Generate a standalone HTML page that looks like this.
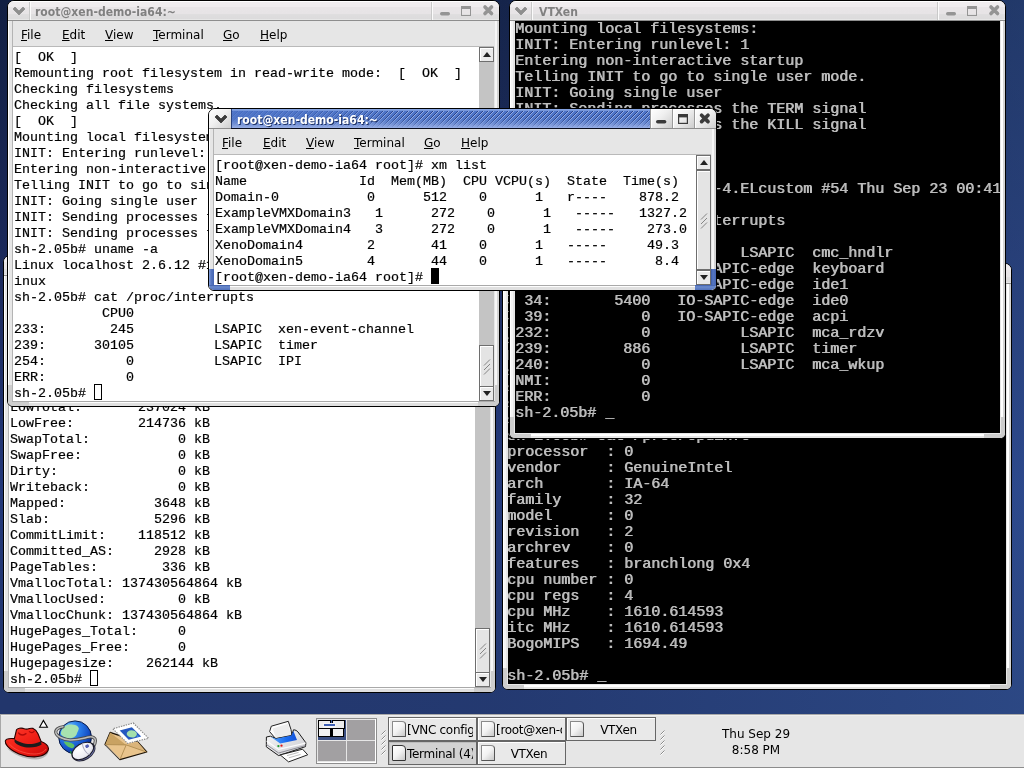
<!DOCTYPE html>
<html lang="en"><head><meta charset="utf-8"><title>desktop</title>
<style>
*{margin:0;padding:0;box-sizing:border-box}
html,body{width:1024px;height:768px;overflow:hidden}
body{position:relative;background:#1d2f62;font-family:"DejaVu Sans","Liberation Sans",sans-serif;font-size:13px;color:#000}
#desk{position:absolute;left:0;top:0;width:1024px;height:768px;
 background:
  linear-gradient(90deg,rgba(60,100,170,0) 0,rgba(60,100,170,.07) 500px,rgba(60,100,170,.38) 1024px),
  linear-gradient(180deg,#121f43 0,#1b295a 255px,#23387a 490px,#22366c 700px);}
.win{position:absolute;border:1px solid #000;border-radius:7px 7px 6px 6px;background:#e6e6e6;overflow:hidden}
.abs{position:absolute}
.tb{position:absolute;left:0;top:0;right:0;height:19px;background:linear-gradient(180deg,#fff 0,#fff 1px,#f0edef 1px,#efecee 5.5px,#e8e5e7 6.5px,#e7e4e6 12.5px,#dfdedf 13.5px,#dcdbdc 18px,#e6e6e6 18px)}
.tbl{position:absolute;left:0;right:0;top:19px;height:1px;background:#8e8e8e}
.tt{position:absolute;top:0;height:19px;line-height:21px;font-weight:bold;font-size:13px;transform:scaleX(.928);transform-origin:0 50%;font-family:"DejaVu Sans Condensed","DejaVu Sans","Liberation Sans",sans-serif;font-stretch:condensed;color:#808080;white-space:nowrap;letter-spacing:0}
.mb{position:absolute;height:25px;background:#e6e6e6;font-size:12px;white-space:nowrap}
.mb span{position:absolute;top:0;line-height:29px}
.mb u{text-decoration:underline;text-underline-offset:1px;text-decoration-thickness:1px}
.term{position:absolute;background:#fff;overflow:hidden}
.vt{position:absolute;background:#000;overflow:hidden}
pre{font-family:"Liberation Mono","DejaVu Sans Mono",monospace;white-space:pre;will-change:transform}
.mb span,.tk b,.clk{will-change:transform}
.clk{display:inline-block}
.term pre{position:absolute;left:1px;top:3px;font-size:13.333px;line-height:16px;color:#000;-webkit-text-stroke:.2px #000}
.vt pre{position:absolute;left:0;top:0;margin-top:1px;margin-left:-.5px;font-size:15px;line-height:16px;color:#bcbcbc;text-shadow:.7px 0 0 #bcbcbc}
.cur{display:inline-block;width:8px;height:16px;border:1px solid #000;vertical-align:top;position:relative;top:-2px}
.curf{display:inline-block;width:8px;height:16px;background:#000;vertical-align:top;position:relative;top:-2px}
.sb{position:absolute;width:15px;background:#c4c4c4;border-left:1px solid #8f8f8f;border-right:1px solid #8f8f8f}
.sbb{position:absolute;left:0;width:15px;height:15px;background:#eaeaea;border:1px solid #6e6e6e;box-shadow:inset 1px 1px 0 #fff}
.sbs{position:absolute;left:0;width:15px;background:#e4e4e4;border:1px solid #6e6e6e;box-shadow:inset 1px 1px 0 #fff}
.ar{position:absolute;left:3px;width:0;height:0;border-left:4px solid transparent;border-right:4px solid transparent}
.aru{top:4px;border-bottom:5px solid #222}
.ard{top:4px;border-top:5px solid #222}
#panel{position:absolute;left:0;top:714px;width:1024px;height:54px;background:#e6e6e6;border-top:1px solid #a9a9a9;border-bottom:1px solid #8c8c8c;border-left:1px solid #a8a8a8;box-shadow:inset 0 1px 0 #efefef}
.tk{position:absolute;height:24px;border:1px solid #666;background:#e9e9e9;box-shadow:inset 1px 1px 0 #fff;font-size:12px;line-height:22px;white-space:nowrap;overflow:hidden}
.tk.on{background:#d2d2d2;box-shadow:inset 1px 1px 0 #bdbdbd}
.tk i{position:absolute;left:3px;top:3px;width:14px;height:16px;border:1px solid #8a8a8a;border-right-color:#555;border-bottom-color:#555;border-radius:1px 4px 1px 1px;background:linear-gradient(135deg,#fff 0,#f2f2f2 50%,#c8c8c8 100%)}
.tk.on i{border-color:#333}
.tk b{position:absolute;font-weight:normal;top:1px;overflow:hidden;height:22px;letter-spacing:-.3px}
.grip{position:absolute;width:5px;background:repeating-linear-gradient(135deg,#e6e6e6 0,#e6e6e6 2.2px,#9a9a9a 2.2px,#9a9a9a 3.2px,#fff 3.2px,#fff 4.2px)}
</style></head>
<body>
<div id="desk"></div>
<div class="win" style="left:3px;top:255px;width:493px;height:438px"><div class="tb"></div><div class="tbl"></div><svg class="abs" style="left:0;top:0" width="22" height="19" viewBox="0 0 22 19"><path d="M5 8L7 6L11 10L15 6L17 8L11 14Z" fill="#8e8e8e" stroke="#8e8e8e" stroke-width=".8" stroke-linejoin="round"/></svg><div class="abs" style="left:21px;top:1px;width:1px;height:18px;background:#c9c9c9"></div><div class="abs" style="left:22px;top:1px;width:1px;height:18px;background:#fbfbfb"></div><div class="tt" style="left:27px">root@xen-demo-ia64:~</div><div class="abs" style="left:423px;top:1px;width:1px;height:18px;background:#c9c9c9"></div><div class="abs" style="left:424px;top:1px;width:1px;height:18px;background:#fbfbfb"></div><svg class="abs" style="left:425px;top:0" width="66" height="19" viewBox="0 0 66 19"><rect x="7" y="11" width="10" height="3.4" rx="1.7" fill="#949494"/><rect x="28.5" y="5.5" width="9" height="9" fill="none" stroke="#949494" stroke-width="1"/><rect x="28" y="5" width="10" height="3" fill="#949494"/><path d="M52 6L58.5 12.5M58.5 6L52 12.5" stroke="#949494" stroke-width="3.6" stroke-linecap="round"/></svg><div class="abs" style="left:0;top:20px;width:1px;height:416px;background:#fff"></div><div class="abs" style="left:4px;top:20px;width:1px;height:412px;background:#b4b4b4"></div><div class="abs" style="left:489px;top:20px;width:2px;height:416px;background:#d4d4d4"></div><div class="abs" style="left:487px;top:20px;width:2px;height:416px;background:#f6f6f6"></div><div class="mb" style="left:5px;top:20px;width:481px"><span style="left:8px"><u>F</u>ile</span><span style="left:49px"><u>E</u>dit</span><span style="left:92px"><u>V</u>iew</span><span style="left:140px"><u>T</u>erminal</span><span style="left:210px"><u>G</u>o</span><span style="left:247px"><u>H</u>elp</span></div><div class="abs" style="left:5px;top:45px;width:481px;height:1px;background:#b9b9b9"></div><div class="term" style="left:5px;top:46px;width:466px;height:385px"><pre style="margin-top:-1px">MemTotal:       245760 kB
MemFree:        214736 kB
Buffers:             0 kB
Cached:           8912 kB
SwapCached:          0 kB
HighTotal:           0 kB
LowTotal:       237024 kB
LowFree:        214736 kB
SwapTotal:           0 kB
SwapFree:            0 kB
Dirty:               0 kB
Writeback:           0 kB
Mapped:           3648 kB
Slab:             5296 kB
CommitLimit:    118512 kB
Committed_AS:     2928 kB
PageTables:        336 kB
VmallocTotal: 137430564864 kB
VmallocUsed:         0 kB
VmallocChunk: 137430564864 kB
HugePages_Total:     0
HugePages_Free:      0
Hugepagesize:    262144 kB
sh-2.05b# <span class="cur"></span></pre></div><div class="sb" style="left:471px;top:46px;height:385px;background:#c4c4c4;border:0"><div class="sbb" style="left:0;top:0"><div class="ar aru"></div></div><div class="sbs" style="left:0;top:326px;height:45px"><svg class="abs" style="left:3px;top:14px" width="8" height="16" viewBox="0 0 8 16"><path d="M1 6.5L7 .5M1 11L7 5M1 15.5L7 9.5" stroke="#858585" stroke-width="1" fill="none"/></svg></div><div class="sbb" style="left:0;top:370px"><div class="ar ard"></div></div></div><div class="abs" style="left:0;top:431px;width:491px;height:1px;background:#a9a9a9"></div><div class="abs" style="left:1px;top:432px;width:489px;height:1px;background:#fdfdfd"></div><div class="abs" style="left:0;top:433px;width:491px;height:3px;background:#e0e0e0"></div><div class="abs" style="left:0;top:415px;width:4px;height:21px;background:#cdcdcd"></div><div class="abs" style="left:0;top:432px;width:21px;height:4px;background:#cdcdcd"></div><div class="abs" style="left:487px;top:415px;width:4px;height:21px;background:#cdcdcd"></div><div class="abs" style="left:470px;top:432px;width:21px;height:4px;background:#cdcdcd"></div></div>
<div class="win" style="left:502px;top:263px;width:510px;height:427px"><div class="tb"></div><div class="tbl"></div><svg class="abs" style="left:0;top:0" width="22" height="19" viewBox="0 0 22 19"><path d="M5 8L7 6L11 10L15 6L17 8L11 14Z" fill="#8e8e8e" stroke="#8e8e8e" stroke-width=".8" stroke-linejoin="round"/></svg><div class="abs" style="left:21px;top:1px;width:1px;height:18px;background:#c9c9c9"></div><div class="abs" style="left:22px;top:1px;width:1px;height:18px;background:#fbfbfb"></div><div class="tt" style="left:28.5px">VTXen</div><div class="abs" style="left:440px;top:1px;width:1px;height:18px;background:#c9c9c9"></div><div class="abs" style="left:441px;top:1px;width:1px;height:18px;background:#fbfbfb"></div><svg class="abs" style="left:442px;top:0" width="66" height="19" viewBox="0 0 66 19"><rect x="7" y="11" width="10" height="3.4" rx="1.7" fill="#949494"/><rect x="28.5" y="5.5" width="9" height="9" fill="none" stroke="#949494" stroke-width="1"/><rect x="28" y="5" width="10" height="3" fill="#949494"/><path d="M52 6L58.5 12.5M58.5 6L52 12.5" stroke="#949494" stroke-width="3.6" stroke-linecap="round"/></svg><div class="abs" style="left:0;top:20px;width:1px;height:405px;background:#fff"></div><div class="abs" style="left:1px;top:20px;width:2px;height:405px;background:#f4f4f4"></div><div class="abs" style="left:504px;top:20px;width:2px;height:405px;background:#fff"></div><div class="abs" style="left:506px;top:20px;width:2px;height:405px;background:#d4d4d4"></div><div class="vt" style="left:5px;top:20px;width:498px;height:400px"><pre style="top:0px;left:-0.5px">INIT: Going single user
INIT: Sending processes the TERM signal
INIT: Sending processes the KILL signal
sh-2.05b# uname -a
Linux localhost 2.6.12 #1 SMP ia64 GNU/Linux
sh-2.05b#
sh-2.05b#
sh-2.05b#
sh-2.05b#
sh-2.05b# cat /proc/cpuinfo
processor  : 0
vendor     : GenuineIntel
arch       : IA-64
family     : 32
model      : 0
revision   : 2
archrev    : 0
features   : branchlong 0x4
cpu number : 0
cpu regs   : 4
cpu MHz    : 1610.614593
itc MHz    : 1610.614593
BogoMIPS   : 1694.49

sh-2.05b# _</pre></div><div class="abs" style="left:1px;top:421px;width:506px;height:2px;background:#fff"></div><div class="abs" style="left:0;top:404px;width:4px;height:21px;background:#cdcdcd"></div><div class="abs" style="left:0;top:421px;width:21px;height:4px;background:#cdcdcd"></div><div class="abs" style="left:504px;top:404px;width:4px;height:21px;background:#cdcdcd"></div><div class="abs" style="left:487px;top:421px;width:21px;height:4px;background:#cdcdcd"></div></div>
<div class="win" style="left:7px;top:0px;width:493px;height:407px"><div class="tb"></div><div class="tbl"></div><svg class="abs" style="left:0;top:0" width="22" height="19" viewBox="0 0 22 19"><path d="M5 8L7 6L11 10L15 6L17 8L11 14Z" fill="#8e8e8e" stroke="#8e8e8e" stroke-width=".8" stroke-linejoin="round"/></svg><div class="abs" style="left:21px;top:1px;width:1px;height:18px;background:#c9c9c9"></div><div class="abs" style="left:22px;top:1px;width:1px;height:18px;background:#fbfbfb"></div><div class="tt" style="left:27px">root@xen-demo-ia64:~</div><div class="abs" style="left:423px;top:1px;width:1px;height:18px;background:#c9c9c9"></div><div class="abs" style="left:424px;top:1px;width:1px;height:18px;background:#fbfbfb"></div><svg class="abs" style="left:425px;top:0" width="66" height="19" viewBox="0 0 66 19"><rect x="7" y="11" width="10" height="3.4" rx="1.7" fill="#949494"/><rect x="28.5" y="5.5" width="9" height="9" fill="none" stroke="#949494" stroke-width="1"/><rect x="28" y="5" width="10" height="3" fill="#949494"/><path d="M52 6L58.5 12.5M58.5 6L52 12.5" stroke="#949494" stroke-width="3.6" stroke-linecap="round"/></svg><div class="abs" style="left:0;top:20px;width:1px;height:385px;background:#fff"></div><div class="abs" style="left:4px;top:20px;width:1px;height:381px;background:#b4b4b4"></div><div class="abs" style="left:489px;top:20px;width:2px;height:385px;background:#d4d4d4"></div><div class="abs" style="left:487px;top:20px;width:2px;height:385px;background:#f6f6f6"></div><div class="mb" style="left:5px;top:20px;width:481px"><span style="left:8px"><u>F</u>ile</span><span style="left:49px"><u>E</u>dit</span><span style="left:92px"><u>V</u>iew</span><span style="left:140px"><u>T</u>erminal</span><span style="left:210px"><u>G</u>o</span><span style="left:247px"><u>H</u>elp</span></div><div class="abs" style="left:5px;top:45px;width:481px;height:1px;background:#b9b9b9"></div><div class="term" style="left:5px;top:46px;width:466px;height:354px"><pre style="margin-top:0px">[  OK  ]
Remounting root filesystem in read-write mode:  [  OK  ]
Checking filesystems
Checking all file systems.
[  OK  ]
Mounting local filesystems:  [  OK  ]
INIT: Entering runlevel: 1
Entering non-interactive startup
Telling INIT to go to single user mode.
INIT: Going single user
INIT: Sending processes the TERM signal
INIT: Sending processes the KILL signal
sh-2.05b# uname -a
Linux localhost 2.6.12 #1 SMP Thu Sep 29 19:02:11 CST 2005 ia64 ia64 ia64 GNU/L
inux
sh-2.05b# cat /proc/interrupts
           CPU0
233:        245          LSAPIC  xen-event-channel
239:      30105          LSAPIC  timer
254:          0          LSAPIC  IPI
ERR:          0
sh-2.05b# <span class="cur"></span></pre></div><div class="sb" style="left:471px;top:46px;height:354px;background:#c4c4c4;border:0"><div class="sbb" style="left:0;top:0"><div class="ar aru"></div></div><div class="sbs" style="left:0;top:298px;height:42px"><svg class="abs" style="left:3px;top:13px" width="8" height="16" viewBox="0 0 8 16"><path d="M1 6.5L7 .5M1 11L7 5M1 15.5L7 9.5" stroke="#858585" stroke-width="1" fill="none"/></svg></div><div class="sbb" style="left:0;top:339px"><div class="ar ard"></div></div></div><div class="abs" style="left:0;top:400px;width:491px;height:1px;background:#a9a9a9"></div><div class="abs" style="left:1px;top:401px;width:489px;height:1px;background:#fdfdfd"></div><div class="abs" style="left:0;top:402px;width:491px;height:3px;background:#e0e0e0"></div><div class="abs" style="left:0;top:384px;width:4px;height:21px;background:#cdcdcd"></div><div class="abs" style="left:0;top:401px;width:21px;height:4px;background:#cdcdcd"></div><div class="abs" style="left:487px;top:384px;width:4px;height:21px;background:#cdcdcd"></div><div class="abs" style="left:470px;top:401px;width:21px;height:4px;background:#cdcdcd"></div></div>
<div class="win" style="left:509px;top:0px;width:497px;height:439px"><div class="tb"></div><div class="tbl"></div><svg class="abs" style="left:0;top:0" width="22" height="19" viewBox="0 0 22 19"><path d="M5 8L7 6L11 10L15 6L17 8L11 14Z" fill="#8e8e8e" stroke="#8e8e8e" stroke-width=".8" stroke-linejoin="round"/></svg><div class="abs" style="left:21px;top:1px;width:1px;height:18px;background:#c9c9c9"></div><div class="abs" style="left:22px;top:1px;width:1px;height:18px;background:#fbfbfb"></div><div class="tt" style="left:28.5px">VTXen</div><div class="abs" style="left:427px;top:1px;width:1px;height:18px;background:#c9c9c9"></div><div class="abs" style="left:428px;top:1px;width:1px;height:18px;background:#fbfbfb"></div><svg class="abs" style="left:429px;top:0" width="66" height="19" viewBox="0 0 66 19"><rect x="7" y="11" width="10" height="3.4" rx="1.7" fill="#949494"/><rect x="28.5" y="5.5" width="9" height="9" fill="none" stroke="#949494" stroke-width="1"/><rect x="28" y="5" width="10" height="3" fill="#949494"/><path d="M52 6L58.5 12.5M58.5 6L52 12.5" stroke="#949494" stroke-width="3.6" stroke-linecap="round"/></svg><div class="abs" style="left:0;top:20px;width:1px;height:417px;background:#fff"></div><div class="abs" style="left:1px;top:20px;width:2px;height:417px;background:#f4f4f4"></div><div class="abs" style="left:491px;top:20px;width:2px;height:417px;background:#fff"></div><div class="abs" style="left:493px;top:20px;width:2px;height:417px;background:#d4d4d4"></div><div class="vt" style="left:5px;top:20px;width:485px;height:412px"><pre style="top:0px;left:0px">Mounting local filesystems:
INIT: Entering runlevel: 1
Entering non-interactive startup
Telling INIT to go to single user mode.
INIT: Going single user
INIT: Sending processes the TERM signal
INIT: Sending processes the KILL signal
sh-2.05b#
sh-2.05b#
sh-2.05b# uname -a
Linux localhost 2.4.21-4.ELcustom #54 Thu Sep 23 00:41:15 CST 2004
sh-2.05b#
sh-2.05b# cat /proc/interrupts
           CPU0
 28:          0          LSAPIC  cmc_hndlr
 33:         12   IO-SAPIC-edge  keyboard
 37:          2   IO-SAPIC-edge  ide1
 34:       5400   IO-SAPIC-edge  ide0
 39:          0   IO-SAPIC-edge  acpi
232:          0          LSAPIC  mca_rdzv
239:        886          LSAPIC  timer
240:          0          LSAPIC  mca_wkup
NMI:          0
ERR:          0
sh-2.05b# _</pre></div><div class="abs" style="left:1px;top:433px;width:493px;height:2px;background:#fff"></div><div class="abs" style="left:0;top:416px;width:4px;height:21px;background:#cdcdcd"></div><div class="abs" style="left:0;top:433px;width:21px;height:4px;background:#cdcdcd"></div><div class="abs" style="left:491px;top:416px;width:4px;height:21px;background:#cdcdcd"></div><div class="abs" style="left:474px;top:433px;width:21px;height:4px;background:#cdcdcd"></div></div>
<div class="win" style="left:208px;top:108px;width:509px;height:183px"><div class="abs" style="left:0;top:0;width:22px;height:19px;background:linear-gradient(135deg,#fff 0,#f0f0f0 45%,#cfcfcf 100%)"></div><svg class="abs" style="left:0;top:0" width="22" height="19" viewBox="0 0 22 19"><path d="M6 8L8 6L12 10L16 6L18 8L12 14Z" fill="#3a3a3a" stroke="#3a3a3a" stroke-width=".8" stroke-linejoin="round"/></svg><div class="abs" style="left:22px;top:0;width:419px;height:19px;background:linear-gradient(180deg,#8aa8e4 0,#7696da 1.5px,#4e74c8 2.5px,#5277c8 10px,#6a8ad2 14px,#9ab0e6 19px);border-left:1px solid #28407c"></div><div class="abs" style="left:23px;top:2px;width:418px;height:16px;-webkit-mask-image:linear-gradient(90deg,rgba(0,0,0,.12) 0,rgba(0,0,0,.35) 18%,#000 42%);mask-image:linear-gradient(90deg,rgba(0,0,0,.12) 0,rgba(0,0,0,.35) 18%,#000 42%)"><div class="abs" style="left:0;top:0;width:418px;height:16px;background:repeating-linear-gradient(135deg,rgba(20,36,100,.62) 0,rgba(20,36,100,.62) .8px,rgba(190,210,250,.6) .8px,rgba(190,210,250,.6) 1.6px,rgba(0,0,0,0) 1.6px,rgba(0,0,0,0) 3.536px);-webkit-mask-image:linear-gradient(180deg,#000 0,#000 45%,rgba(0,0,0,.15) 100%);mask-image:linear-gradient(180deg,#000 0,#000 45%,rgba(0,0,0,.15) 100%)"></div></div><div class="abs" style="left:0;top:19px;width:507px;height:1px;background:#8e8e8e"></div><div class="abs" style="left:22px;top:19px;width:419px;height:1px;background:#080c1c"></div><div class="tt" style="left:28px;color:#fff;text-shadow:1px 1px 0 #1c2f63">root@xen-demo-ia64:~</div><div class="abs" style="left:441px;top:0;width:22px;height:19px;background:linear-gradient(135deg,#fff 0,#efefef 45%,#cdcdcd 100%);border-left:1px solid #9a9a9a;box-shadow:inset 1px 1px 0 #fff"></div><div class="abs" style="left:463px;top:0;width:22px;height:19px;background:linear-gradient(135deg,#fff 0,#efefef 45%,#cdcdcd 100%);border-left:1px solid #9a9a9a;box-shadow:inset 1px 1px 0 #fff"></div><div class="abs" style="left:485px;top:0;width:22px;height:19px;background:linear-gradient(135deg,#fff 0,#efefef 45%,#cdcdcd 100%);border-left:1px solid #9a9a9a;box-shadow:inset 1px 1px 0 #fff"></div><svg class="abs" style="left:441px;top:0" width="66" height="19" viewBox="0 0 66 19"><rect x="6" y="11" width="10.4" height="3.6" rx="1.8" fill="#3a3a3a"/><rect x="28.6" y="5.6" width="8.8" height="8.8" fill="none" stroke="#3a3a3a" stroke-width="1.2"/><rect x="28" y="5" width="10" height="3.4" fill="#3a3a3a"/><path d="M51.6 6.2L58 12.6M58 6.2L51.6 12.6" stroke="#3a3a3a" stroke-width="3.7" stroke-linecap="round"/></svg><div class="abs" style="left:0;top:20px;width:1px;height:161px;background:#fff"></div><div class="abs" style="left:4px;top:20px;width:1px;height:157px;background:#b4b4b4"></div><div class="abs" style="left:505px;top:20px;width:2px;height:161px;background:#d4d4d4"></div><div class="abs" style="left:503px;top:20px;width:2px;height:161px;background:#f6f6f6"></div><div class="mb" style="left:5px;top:20px;width:497px"><span style="left:8px"><u>F</u>ile</span><span style="left:49px"><u>E</u>dit</span><span style="left:92px"><u>V</u>iew</span><span style="left:140px"><u>T</u>erminal</span><span style="left:210px"><u>G</u>o</span><span style="left:247px"><u>H</u>elp</span></div><div class="abs" style="left:5px;top:45px;width:497px;height:1px;background:#b9b9b9"></div><div class="term" style="left:5px;top:46px;width:482px;height:130px"><pre style="margin-top:0px">[root@xen-demo-ia64 root]# xm list
Name              Id  Mem(MB)  CPU VCPU(s)  State  Time(s)
Domain-0           0      512    0      1   r----    878.2
ExampleVMXDomain3   1      272    0      1   -----   1327.2
ExampleVMXDomain4   3      272    0      1   -----    273.0
XenoDomain4        2       41    0      1   -----     49.3
XenoDomain5        4       44    0      1   -----      8.4
[root@xen-demo-ia64 root]# <span class="curf"></span></pre></div><div class="sb" style="left:487px;top:46px;height:130px;background:#e6e6e6;border:0"><div class="sbb" style="left:0;top:0"><div class="ar aru"></div></div><div class="sbs" style="left:0;top:15px;height:100px"><svg class="abs" style="left:3px;top:42px" width="8" height="16" viewBox="0 0 8 16"><path d="M1 6.5L7 .5M1 11L7 5M1 15.5L7 9.5" stroke="#858585" stroke-width="1" fill="none"/></svg></div><div class="sbb" style="left:0;top:115px"><div class="ar ard"></div></div></div><div class="abs" style="left:0;top:176px;width:507px;height:1px;background:#a9a9a9"></div><div class="abs" style="left:1px;top:177px;width:505px;height:1px;background:#fdfdfd"></div><div class="abs" style="left:0;top:178px;width:507px;height:3px;background:#e0e0e0"></div><div class="abs" style="left:0;top:160px;width:5px;height:21px;background:linear-gradient(90deg,#86a2dc 0,#5878c2 40%,#4464b2 100%)"></div><div class="abs" style="left:0;top:176px;width:21px;height:5px;background:linear-gradient(180deg,#3a5aa8 0,#6a8acc 35%,#5272bc 100%)"></div><div class="abs" style="left:502px;top:160px;width:5px;height:21px;background:linear-gradient(90deg,#3a5aa8 0,#5878c2 40%,#4464b2 100%)"></div><div class="abs" style="left:486px;top:176px;width:21px;height:5px;background:linear-gradient(180deg,#3a5aa8 0,#6a8acc 35%,#5272bc 100%)"></div></div>
<div id="panel"><svg class="abs" style="left:-1px;top:-1px" width="320" height="54" viewBox="0 714 320 54">
<defs>
<linearGradient id="rh" x1="0" y1="0" x2="1" y2="1"><stop offset="0" stop-color="#ff3a2a"/><stop offset=".55" stop-color="#ee1c14"/><stop offset="1" stop-color="#c40808"/></linearGradient>
<radialGradient id="gl" cx=".32" cy=".25" r=".8"><stop offset="0" stop-color="#8fd2ff"/><stop offset=".35" stop-color="#2f86ee"/><stop offset=".75" stop-color="#1450c8"/><stop offset="1" stop-color="#0a2478"/></radialGradient>
<radialGradient id="ms" cx=".4" cy=".3" r=".8"><stop offset="0" stop-color="#fff"/><stop offset=".7" stop-color="#ececf2"/><stop offset="1" stop-color="#b8b8cc"/></radialGradient>
<linearGradient id="pb" x1="0" y1="0" x2="1" y2="1"><stop offset="0" stop-color="#fafafa"/><stop offset="1" stop-color="#c9c9cf"/></linearGradient>
<linearGradient id="bl" x1="0" y1="0" x2="1" y2="0"><stop offset="0" stop-color="#5aa8ff"/><stop offset=".6" stop-color="#1a6cf0"/><stop offset="1" stop-color="#1450d8"/></linearGradient>
</defs>
<!-- red hat -->
<path d="M7 748C12 754 24 759.5 36 759.5C43 759 47.5 756 48.5 752C40 757 20 755 7 748Z" fill="#000" opacity=".22"/>
<path d="M5.3 741.2C5.6 739.4 8.5 738 14.4 738.6L16.5 729.8C17.5 728.2 21 727.8 23.2 728.4C25 729 26.4 729.3 27.6 729C29.6 728.2 31.6 728 33.1 728.4C35.6 729.4 37.2 731.6 38 733.7L41.1 741.4C45.2 742.8 48.2 745.4 48.5 748.5C48.4 752.6 44 756.4 34.5 756.9C24 757 13 752.4 7.6 746.4C5.8 744.4 5.1 742.6 5.3 741.2Z" fill="url(#rh)" stroke="#2a0000" stroke-width="1.1"/>
<path d="M14.5 738.8C18 742.4 26 744.6 32 744C36 743.6 39.4 742.4 40.9 741L41.6 744.4C38.6 746.6 33 747.8 27 747.4C21.6 747 16.6 744.8 14.6 742Z" fill="#1c1c1c"/>
<path d="M18.6 733C20.4 735.4 23.4 735.4 26 733.6M29.4 731.6C30.8 733 33 732.8 34 731.4" stroke="#b00a0a" stroke-width="1.3" fill="none" stroke-linecap="round"/>
<path d="M9 743.5C13 749.5 25 754 34 754C40 754 44.6 752 46 749" stroke="#ff5a48" stroke-width="1" fill="none" opacity=".7"/>
<path d="M39.6 727.2L43.4 720.4L47.4 727.2Z" fill="#fff" stroke="#000" stroke-width="1.1" stroke-linejoin="miter"/>
<!-- globe + mouse -->
<circle cx="75.1" cy="737.3" r="16.4" fill="url(#gl)" stroke="#061848" stroke-width="1"/>
<path d="M62.5 729C64 725.6 69 723.6 73 724.8C76 725 78.6 726.2 78.8 728.6C78.4 731.4 77 732.4 76.6 734.6C75.4 737 72.6 738.6 69 738.4C65.6 738 62.4 736.4 60.8 734.2C60.8 732.2 61.4 730.6 62.5 729Z" fill="#a8e2b0"/>
<path d="M63.6 741.6C66.6 741.4 70.6 742.6 73.6 744.2C75.2 745.4 74.4 747.4 72.4 748.2C69.6 748.4 65.4 745.6 63.6 741.6Z" fill="#5cc068"/>
<path d="M70.6 751C70.4 753 71.4 754 72.4 754.6" stroke="#2a9a3a" stroke-width="1.2" fill="none"/>
<path d="M63 726.8C58.4 727.2 55.2 729.8 55.8 732.6C56.8 736.4 62.6 739.4 70 740C78 740.2 84 738 89 737C93 736.4 95.4 738 95.4 740.6C95.4 743 94.4 745 93.4 746.6" stroke="#4a4a4a" stroke-width="3.2" fill="none" stroke-linecap="round"/>
<path d="M63 726.8C58.4 727.2 55.2 729.8 55.8 732.6C56.8 736.4 62.6 739.4 70 740C78 740.2 84 738 89 737C93 736.4 95.4 738 95.4 740.6C95.4 743 94.4 745 93.4 746.6" stroke="#bdbdbd" stroke-width="1.5" fill="none" stroke-linecap="round"/>
<g transform="rotate(-31 82.8 751)"><ellipse cx="83.2" cy="752.2" rx="12.2" ry="7.8" fill="#7a82c8" stroke="#2a2a3a" stroke-width="1"/><ellipse cx="82.8" cy="751" rx="11.9" ry="7.3" fill="url(#ms)" stroke="#1a1a24" stroke-width="1.1"/><path d="M86.5 744.2C84.2 748 84.2 754 86.5 757.8" stroke="#a8a8bc" stroke-width=".9" fill="none"/><rect x="87.2" y="747.6" width="3.6" height="3" rx="1" fill="#5560b4"/></g>
<!-- envelope + stamp -->
<path d="M110.1 732.4L105 744.6L119.9 759.6L146.8 752L137.5 741.6Z" fill="#e9c48c" stroke="#1c1206" stroke-width="1.2" stroke-linejoin="round"/>
<path d="M110.1 732.6L126.2 744.9L105.3 744.6Z" fill="#c9a262"/>
<path d="M126.2 744.9L137.5 741.8L146.4 752Z" fill="#dab47a"/>
<path d="M105.3 744.6L126.2 744.9L146.4 752M126.2 744.9L120.2 759" stroke="#b08c50" stroke-width=".9" fill="none"/>
<path d="M105.6 745.2L120.1 759.2" stroke="#fff" stroke-width=".8" opacity=".7"/>
<path d="M133.3 723L148.6 738.3L127.6 743.4L112.8 728.8Z" fill="#fff" stroke="#8a8a8a" stroke-width="1.2" stroke-dasharray="1.4 1.1"/>
<path d="M131.9 727.2L141.2 736.5L128.7 739.8L119.7 730.5Z" fill="#2458c0"/>
<path d="M128 731.4C130.4 729.6 134.4 730 136.4 732.4C137.6 734.4 136.4 736.6 133.4 737.4C130.4 737.8 127.6 736.4 126.8 734.4C126.6 733.2 127 732.2 128 731.4Z" fill="#a4e0ac"/>
<path d="M137.4 735.2L139.2 736.2L136.6 737Z" fill="#4aa0f0"/>
<!-- printer -->
<path d="M269.6 731.6L271.3 726.2L288.3 721.3L291 729.6L292 736L275.4 738.4Z" fill="#fdfdfd" stroke="#222" stroke-width="1" stroke-linejoin="round"/>
<path d="M272.6 728.4L288 723.8L291.2 735.6L276 738Z" fill="#ececec"/>
<path d="M266.4 737L270.4 736.2L276 738.6L291.6 735.4L293.5 729.8C295.4 729.8 297 730.8 298 732L305.9 742.8L305.5 746.6L297.4 749.4L278.6 755.6L266.3 746.8Z" fill="url(#pb)" stroke="#1a1a1a" stroke-width="1" stroke-linejoin="round"/>
<path d="M270.3 736.4L275.8 738.8L291.5 735.4L293.4 731L297 740L280.2 743.6Z" fill="url(#bl)"/>
<path d="M266.6 741L278.6 749.4L305.6 743.2" stroke="#fff" stroke-width="1.2" fill="none" opacity=".9"/>
<path d="M266.6 744.6L278.6 753L305.4 745.6" stroke="#8e8e96" stroke-width="1" fill="none"/>
<path d="M280.2 754.9L302.6 749.2L307.7 754.8L288.6 761.9Z" fill="#fff" stroke="#222" stroke-width="1" stroke-linejoin="round"/>
<path d="M287 755.6L298.6 752.4M288.8 757.8L300.6 754.4" stroke="#b4b4b4" stroke-width=".9"/>
<circle cx="278.4" cy="746.1" r="1.15" fill="#1e9a2e"/><circle cx="281.5" cy="745.7" r="1.15" fill="#e01818"/>
</svg><div class="abs" style="left:315px;top:3px;width:61px;height:46px;background:#e6e6e6;border:1px solid #8e8e8e;box-shadow:inset -1px -1px 0 #fff"></div><div class="abs" style="left:317px;top:5px;width:28px;height:20px;background:#3b4f82"></div><div class="abs" style="left:346px;top:5px;width:28px;height:20px;background:#a2a0a2"></div><div class="abs" style="left:317px;top:26px;width:28px;height:20px;background:#a2a0a2"></div><div class="abs" style="left:346px;top:26px;width:28px;height:20px;background:#a2a0a2"></div><div class="abs" style="left:317px;top:5px;width:14px;height:9px;background:#ececec;border:1px solid #000"></div><div class="abs" style="left:330px;top:5px;width:14px;height:9px;background:#ececec;border:1px solid #000"></div><div class="abs" style="left:317px;top:13px;width:13px;height:9px;background:#f2f2f2;border:1px solid #000"></div><div class="abs" style="left:330px;top:13px;width:13px;height:9px;background:#f2f2f2;border:1px solid #000"></div><div class="abs" style="left:329px;top:5px;width:3px;height:17px;background:#000"></div><div class="abs" style="left:330px;top:5px;width:1px;height:3px;background:#3b5aa0"></div><div class="abs" style="left:322px;top:8px;width:13px;height:5px;background:#f4f4f4"></div><div class="abs" style="left:323px;top:9px;width:11px;height:2px;background:#3f60b4"></div><svg class="abs" style="left:380px;top:15px" width="6" height="26" viewBox="0 0 6 26"><path d="M.5 5.5L4.5 1.5" stroke="#fff" stroke-width="1" fill="none"/><path d="M.5 4.5L4.5 0.5" stroke="#8c8c8c" stroke-width="1" fill="none"/><path d="M.5 10.5L4.5 6.5" stroke="#fff" stroke-width="1" fill="none"/><path d="M.5 9.5L4.5 5.5" stroke="#8c8c8c" stroke-width="1" fill="none"/><path d="M.5 15.5L4.5 11.5" stroke="#fff" stroke-width="1" fill="none"/><path d="M.5 14.5L4.5 10.5" stroke="#8c8c8c" stroke-width="1" fill="none"/><path d="M.5 20.5L4.5 16.5" stroke="#fff" stroke-width="1" fill="none"/><path d="M.5 19.5L4.5 15.5" stroke="#8c8c8c" stroke-width="1" fill="none"/><path d="M.5 25.5L4.5 21.5" stroke="#fff" stroke-width="1" fill="none"/><path d="M.5 24.5L4.5 20.5" stroke="#8c8c8c" stroke-width="1" fill="none"/></svg><svg class="abs" style="left:659px;top:15px" width="6" height="26" viewBox="0 0 6 26"><path d="M.5 5.5L4.5 1.5" stroke="#fff" stroke-width="1" fill="none"/><path d="M.5 4.5L4.5 0.5" stroke="#8c8c8c" stroke-width="1" fill="none"/><path d="M.5 10.5L4.5 6.5" stroke="#fff" stroke-width="1" fill="none"/><path d="M.5 9.5L4.5 5.5" stroke="#8c8c8c" stroke-width="1" fill="none"/><path d="M.5 15.5L4.5 11.5" stroke="#fff" stroke-width="1" fill="none"/><path d="M.5 14.5L4.5 10.5" stroke="#8c8c8c" stroke-width="1" fill="none"/><path d="M.5 20.5L4.5 16.5" stroke="#fff" stroke-width="1" fill="none"/><path d="M.5 19.5L4.5 15.5" stroke="#8c8c8c" stroke-width="1" fill="none"/><path d="M.5 25.5L4.5 21.5" stroke="#fff" stroke-width="1" fill="none"/><path d="M.5 24.5L4.5 20.5" stroke="#8c8c8c" stroke-width="1" fill="none"/></svg><div class="tk" style="left:387px;top:2px;width:89px"><i></i><b style="left:18px;width:66px">[VNC config]</b></div><div class="tk on" style="left:387px;top:26px;width:89px"><i></i><b style="left:18px;width:66px">Terminal (4)</b></div><div class="tk" style="left:476px;top:2px;width:89px"><i></i><b style="left:18px;width:66px">[root@xen-demo-ia64:~]</b></div><div class="tk" style="left:476px;top:26px;width:89px"><i></i><b style="left:18px;width:66px;text-align:center">VTXen</b></div><div class="tk" style="left:565px;top:2px;width:90px"><i></i><b style="left:18px;width:67px;text-align:center">VTXen</b></div><div class="abs" style="left:698px;top:11px;width:114px;text-align:center;font-size:12px;line-height:16px" ><span class="clk">Thu Sep 29<br>8:58 PM</span></div></div>
</body></html>
